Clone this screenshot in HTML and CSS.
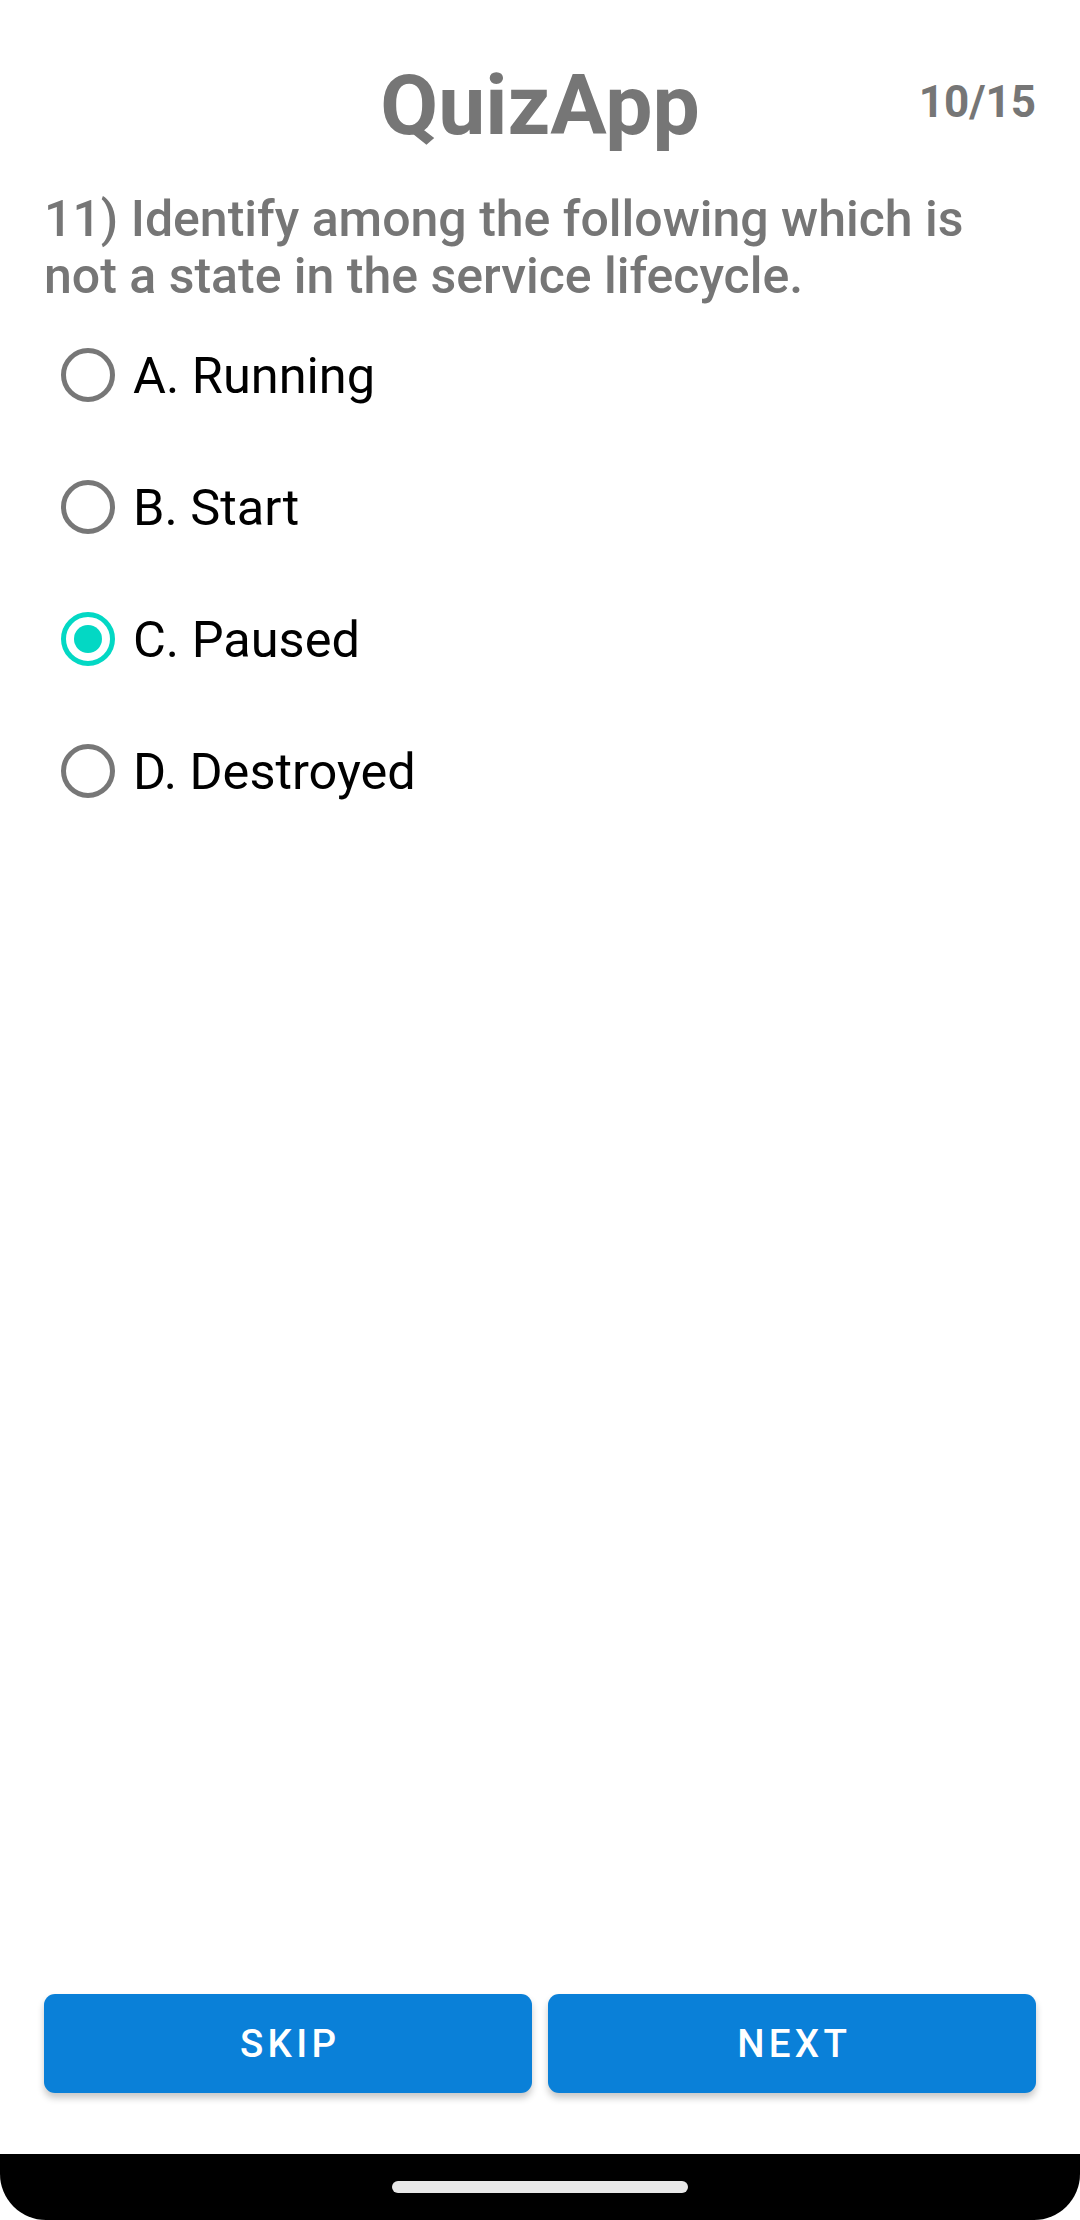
FILE: index.html
```html
<!DOCTYPE html>
<html lang="en">
<head>
<meta charset="utf-8">
<title>QuizApp</title>
<link rel="stylesheet" href="styles.css">
</head>
<body>
<div class="screen">
  <main class="content">
    <header class="header">
      <span class="spacer"></span>
      <h1 class="title">QuizApp</h1>
      <span class="counter">10/15</span>
    </header>
    <p class="question">11) Identify among the following which is not a state in the service lifecycle.</p>
    <div class="options">
      <div class="option"><span class="radio"></span><span class="label">A. Running</span></div>
      <div class="option"><span class="radio"></span><span class="label">B. Start</span></div>
      <div class="option"><span class="radio checked"></span><span class="label">C. Paused</span></div>
      <div class="option"><span class="radio"></span><span class="label">D. Destroyed</span></div>
    </div>
  </main>
  <div class="actions">
    <button class="btn">SKIP</button>
    <button class="btn">NEXT</button>
  </div>
  <div class="navbar"><span class="pill"></span></div>
</div>
</body>
</html>
```

FILE: styles.css
```css
* { box-sizing: border-box; }
html, body { margin: 0; padding: 0; background: #ffffff; }
body { font-family: Roboto, "Noto Sans", "Liberation Sans", sans-serif; }

.screen {
  width: 1080px;
  height: 2220px;
  display: flex;
  flex-direction: column;
  background: #ffffff;
}

.content {
  flex: 1;
  padding: 57px 44px 0 44px;
}

.header {
  display: grid;
  grid-template-columns: 1fr auto 1fr;
  align-items: start;
}

.title {
  margin: 0;
  font-size: 84px;
  font-weight: 700;
  line-height: 98px;
  color: #767676;
  text-align: center;
}

.counter {
  justify-self: end;
  margin-top: 19px;
  font-size: 44px;
  font-weight: 700;
  line-height: 52px;
  color: #767676;
}

.question {
  margin: 36px 0 0 0;
  font-size: 50px;
  font-weight: 500;
  line-height: 57px;
  color: #767676;
}

.options {
  display: flex;
  flex-direction: column;
  margin-top: 4px;
}

.option {
  display: flex;
  align-items: center;
  height: 132px;
  padding-left: 17px;
  gap: 18px;
}

.radio {
  width: 54px;
  height: 54px;
  border-radius: 50%;
  border: 5.5px solid #777777;
  display: flex;
  align-items: center;
  justify-content: center;
  flex: none;
}

.radio.checked {
  border-color: #03d8c4;
}

.radio.checked::after {
  content: "";
  width: 28px;
  height: 28px;
  border-radius: 50%;
  background: #03d8c4;
}

.label {
  font-size: 50.5px;
  line-height: 58px;
  color: #000000;
  margin-top: 2px;
}

.actions {
  display: flex;
  gap: 16px;
  padding: 0 44px;
}

.btn {
  flex: 1;
  height: 99px;
  border: none;
  border-radius: 11px;
  background: #0a80d8;
  color: #ffffff;
  font-family: Roboto, "Noto Sans", "Liberation Sans", sans-serif;
  font-size: 38.5px;
  font-weight: 500;
  letter-spacing: 4.3px;
  text-indent: 4.3px;
  box-shadow: 0 5px 7px rgba(0, 0, 0, 0.22);
  padding: 0;
}

.navbar {
  margin-top: 61px;
  height: 66px;
  background: #000000;
  border-radius: 0 0 46px 46px;
  display: flex;
  justify-content: center;
  padding-top: 27px;
}

.pill {
  width: 296px;
  height: 12px;
  border-radius: 6px;
  background: #e8e8e8;
}
```
